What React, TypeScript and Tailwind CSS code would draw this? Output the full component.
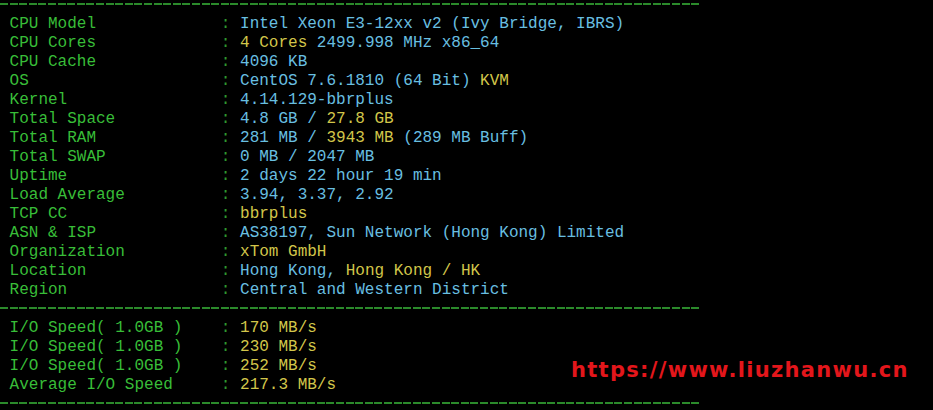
import React from 'react';

type Seg = { t: string; c: 'b' | 'y' };

const ROWS: { label: string; value: Seg[] }[] = [
  { label: 'CPU Model', value: [{ t: 'Intel Xeon E3-12xx v2 (Ivy Bridge, IBRS)', c: 'b' }] },
  { label: 'CPU Cores', value: [{ t: '4 Cores', c: 'y' }, { t: ' 2499.998 MHz x86_64', c: 'b' }] },
  { label: 'CPU Cache', value: [{ t: '4096 KB', c: 'b' }] },
  { label: 'OS', value: [{ t: 'CentOS 7.6.1810 (64 Bit)', c: 'b' }, { t: ' KVM', c: 'y' }] },
  { label: 'Kernel', value: [{ t: '4.14.129-bbrplus', c: 'b' }] },
  { label: 'Total Space', value: [{ t: '4.8 GB / ', c: 'b' }, { t: '27.8 GB', c: 'y' }] },
  { label: 'Total RAM', value: [{ t: '281 MB / ', c: 'b' }, { t: '3943 MB', c: 'y' }, { t: ' (289 MB Buff)', c: 'b' }] },
  { label: 'Total SWAP', value: [{ t: '0 MB / 2047 MB', c: 'b' }] },
  { label: 'Uptime', value: [{ t: '2 days 22 hour 19 min', c: 'b' }] },
  { label: 'Load Average', value: [{ t: '3.94, 3.37, 2.92', c: 'b' }] },
  { label: 'TCP CC', value: [{ t: 'bbrplus', c: 'y' }] },
  { label: 'ASN & ISP', value: [{ t: 'AS38197, Sun Network (Hong Kong) Limited', c: 'b' }] },
  { label: 'Organization', value: [{ t: 'xTom GmbH', c: 'y' }] },
  { label: 'Location', value: [{ t: 'Hong Kong, ', c: 'b' }, { t: 'Hong Kong / HK', c: 'y' }] },
  { label: 'Region', value: [{ t: 'Central and Western District', c: 'b' }] },
];

const IO_ROWS: { label: string; value: string }[] = [
  { label: 'I/O Speed( 1.0GB )', value: '170 MB/s' },
  { label: 'I/O Speed( 1.0GB )', value: '230 MB/s' },
  { label: 'I/O Speed( 1.0GB )', value: '252 MB/s' },
  { label: 'Average I/O Speed', value: '217.3 MB/s' },
];

const Separator = ({ first = false }: { first?: boolean }) => (
  <div className={first ? 'h-[13.5px] pt-[3px]' : 'h-[19px] flex items-center'}>
    <div className="w-[701px] h-[2px] bg-[repeating-linear-gradient(90deg,#2b8a2b_0_8px,transparent_8px_9.6px)]" />
  </div>
);

const Line = ({ label, children }: { label: string; children: React.ReactNode }) => (
  <div className="h-[19px] leading-[19px] pt-[1.5px] whitespace-pre">
    <span className="text-[#38bd38]">{' ' + label.padEnd(22, ' ')}</span>
    <span className="text-[#2f9a2f]">: </span>
    {children}
  </div>
);

export default function App() {
  return (
    <div className="relative w-[933px] h-[410px] overflow-hidden bg-black font-['Liberation_Mono',monospace] text-[16px]">
      <Separator first />
      {ROWS.map((r) => (
        <Line key={r.label} label={r.label}>
          {r.value.map((s, i) => (
            <span key={i} className={s.c === 'y' ? 'text-[#d2c64a]' : 'text-[#68bfe0]'}>
              {s.t}
            </span>
          ))}
        </Line>
      ))}
      <Separator />
      {IO_ROWS.map((r, i) => (
        <Line key={i} label={r.label}>
          <span className="text-[#d2c64a]">{r.value}</span>
        </Line>
      ))}
      <Separator />
      <div className="absolute left-[571px] top-[358px] text-[21px] leading-[25px] font-bold tracking-[1.3px] text-[#e3161b] font-['DejaVu_Sans',sans-serif]">
        https://www.liuzhanwu.cn
      </div>
    </div>
  );
}
